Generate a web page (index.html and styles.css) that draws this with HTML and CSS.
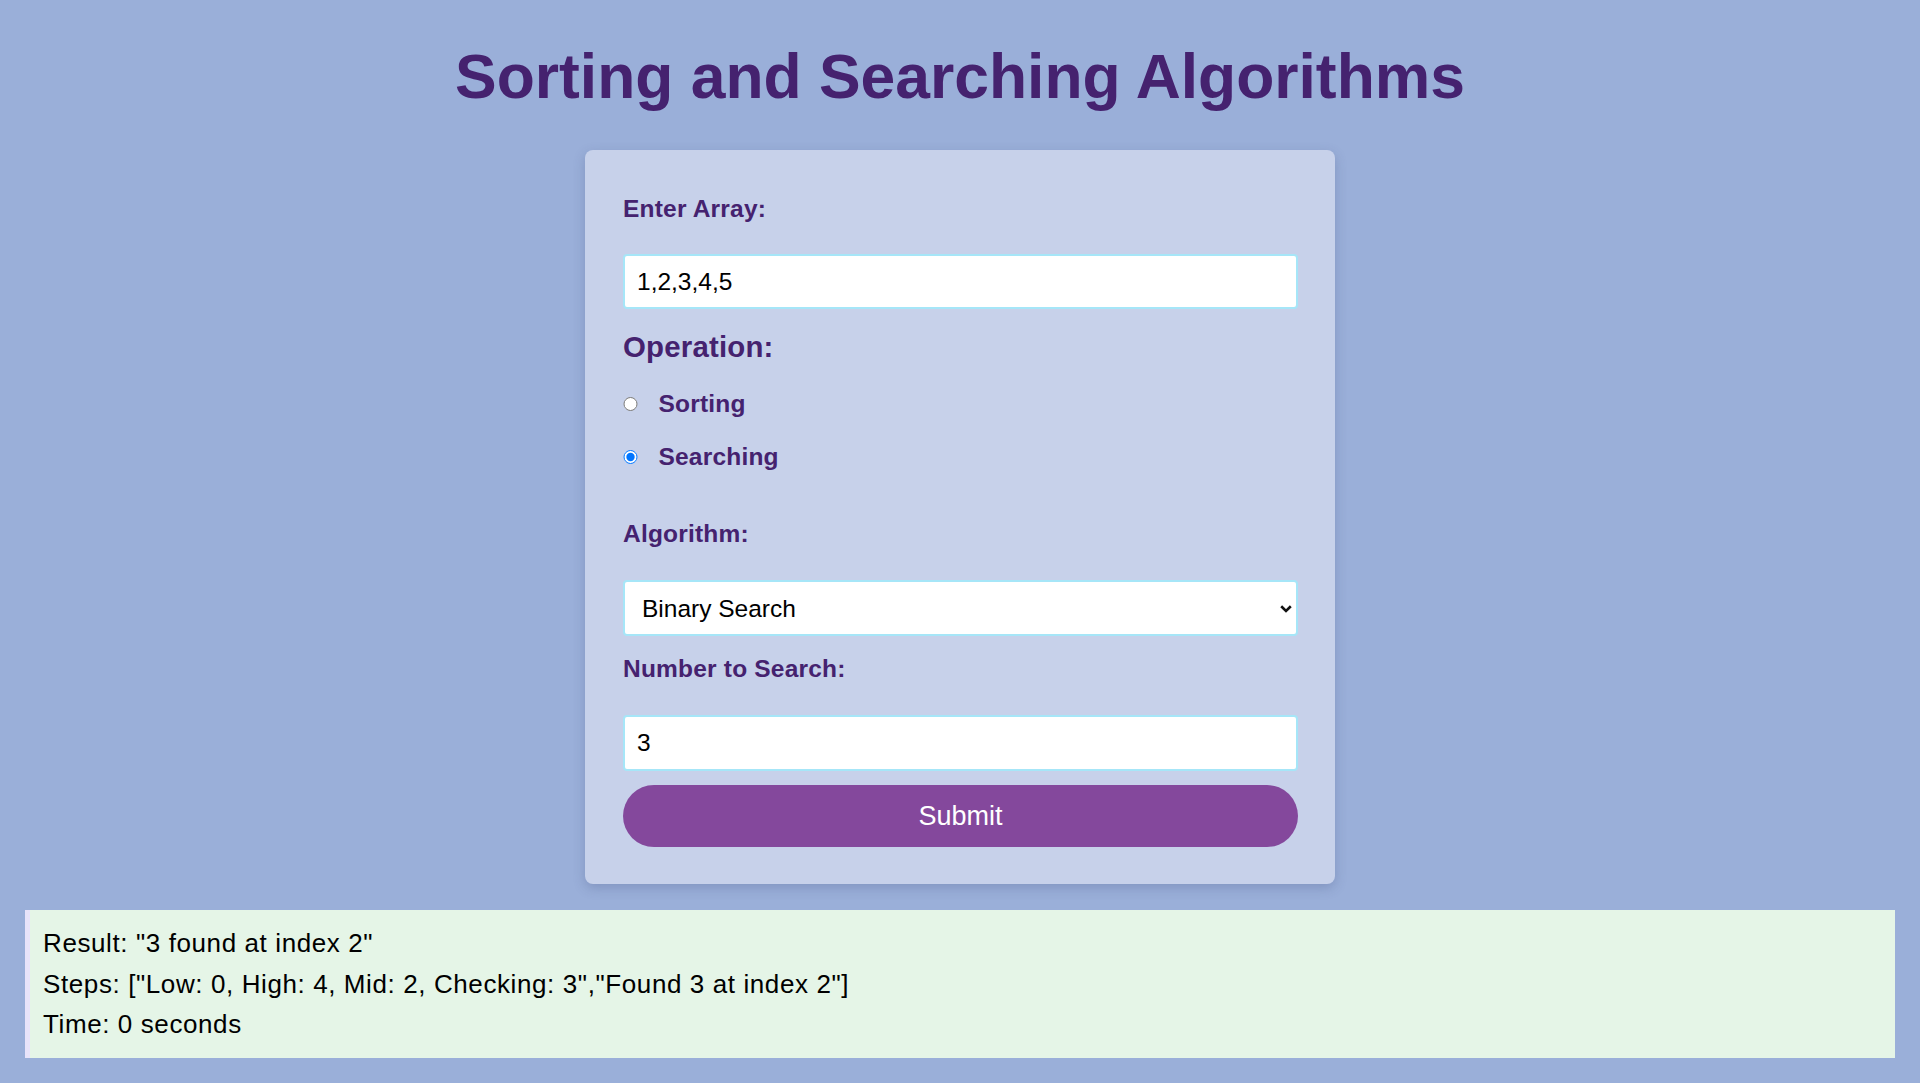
FILE: index.html
```html
<!DOCTYPE html>
<html lang="en">
<head>
<meta charset="utf-8">
<title>Sorting and Searching Algorithms</title>
<link rel="stylesheet" href="styles.css">
</head>
<body>
<h1 class="title">Sorting and Searching Algorithms</h1>
<form class="card">
  <label class="label" for="arr">Enter Array:</label>
  <input class="field field-first" id="arr" type="text" value="1,2,3,4,5">
  <h3 class="op-title">Operation:</h3>
  <label class="radio-row radio-first"><input class="radio" type="radio" name="op"><span>Sorting</span></label>
  <label class="radio-row radio-second"><input class="radio" type="radio" name="op" checked><span>Searching</span></label>
  <label class="label label-algo" for="algo">Algorithm:</label>
  <div class="select-wrap">
    <select class="field select" id="algo">
      <option>Binary Search</option>
      <option>Linear Search</option>
    </select>
    <svg class="chevron" width="12" height="8" viewBox="0 0 12 8" aria-hidden="true">
      <path d="M1.2 1.3 L6 6 L10.8 1.3" fill="none" stroke="#111" stroke-width="2.6" stroke-linecap="butt" stroke-linejoin="miter"/>
    </svg>
  </div>
  <label class="label label-num" for="num">Number to Search:</label>
  <input class="field field-num" id="num" type="text" value="3">
  <button class="submit" type="button">Submit</button>
</form>
<div class="result">
  <div class="line">Result: "3 found at index 2"</div>
  <div class="line">Steps: ["Low: 0, High: 4, Mid: 2, Checking: 3","Found 3 at index 2"]</div>
  <div class="line">Time: 0 seconds</div>
</div>
</body>
</html>
```

FILE: styles.css
```css
html, body {
  margin: 0;
  padding: 0;
}
body {
  background: #9aafd9;
  font-family: "Liberation Sans", Arial, sans-serif;
  min-height: 1083px;
  overflow: hidden;
}
.title {
  margin: 41px 0 0;
  text-align: center;
  font-size: 62.4px;
  line-height: 71px;
  font-weight: bold;
  color: #45226f;
}
.card {
  box-sizing: border-box;
  width: 750px;
  margin: 38px auto 0;
  padding: 45px 37px 37px 38px;
  background: #c7d1ea;
  border-radius: 8px;
  box-shadow: 0 4px 12px rgba(60, 70, 120, 0.25);
  display: flex;
  flex-direction: column;
}
.label {
  display: block;
  font-size: 24.5px;
  line-height: 28px;
  font-weight: bold;
  letter-spacing: 0.2px;
  color: #45226f;
}
.field {
  box-sizing: border-box;
  width: 100%;
  height: 56px;
  margin: 31px 0 0;
  border: 2px solid #a6e6f8;
  border-radius: 4px;
  background: #ffffff;
  font-family: "Liberation Sans", Arial, sans-serif;
  font-size: 24.5px;
  color: #000;
  padding: 0 12px;
  outline: none;
}
.field-first {
  height: 55px;
}
.select-wrap {
  position: relative;
  margin-top: 32px;
}
.select {
  display: block;
  margin: 0;
  padding: 0 40px 0 17px;
  appearance: none;
  -webkit-appearance: none;
}
.chevron {
  position: absolute;
  right: 6px;
  top: 25px;
  pointer-events: none;
}
.op-title {
  margin: 21px 0 0;
  font-size: 29.4px;
  line-height: 34px;
  font-weight: bold;
  letter-spacing: 0.2px;
  color: #45226f;
}
.radio-row {
  display: flex;
  align-items: center;
  height: 28px;
  font-size: 24.5px;
  font-weight: bold;
  letter-spacing: 0.2px;
  color: #45226f;
}
.radio-first {
  margin-top: 26px;
}
.radio-second {
  margin-top: 25px;
}
.radio {
  width: 14.5px;
  height: 14.5px;
  margin: 0 21px 0 0;
}
.label-algo {
  margin-top: 49px;
}
.label-num {
  margin-top: 19px;
}
.field-num {
  margin-top: 32px;
}
.submit {
  height: 62px;
  margin-top: 14px;
  border: none;
  border-radius: 31px;
  background: #84489c;
  color: #ffffff;
  font-family: "Liberation Sans", Arial, sans-serif;
  font-size: 27px;
  cursor: pointer;
}
.result {
  margin: 26px 25px 0;
  padding: 13px 13px 13px;
  background: #e5f5e7;
  border-left: 5px solid #e8e3fa;
  font-size: 26px;
  letter-spacing: 0.6px;
  line-height: 40.7px;
  color: #000;
}
```
